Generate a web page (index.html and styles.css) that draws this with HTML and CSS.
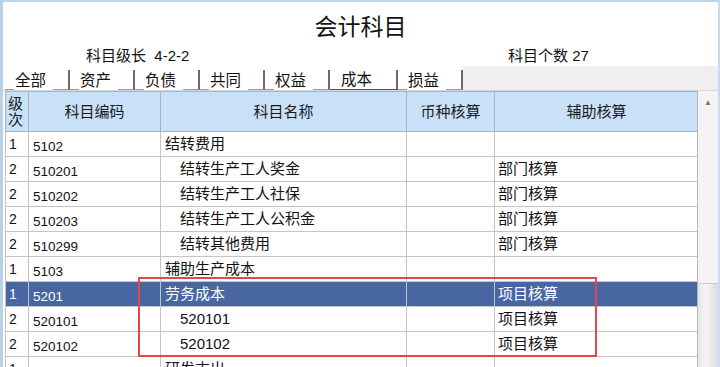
FILE: index.html
```html
<!DOCTYPE html>
<html lang="zh-CN">
<head>
  <meta charset="UTF-8">
  <title>会计科目</title>
  <link rel="stylesheet" href="styles.css">
</head>
<body>

<div class="window">
  <h1 class="title">会计科目</h1>
  <div class="info">
    <span class="info-level">科目级长&nbsp; 4-2-2</span>
    <span class="info-count">科目个数 27</span>
  </div>

  <!-- 科目类别 -->
  <div class="tabs">
    <div class="tab"><span>全部</span></div>
    <div class="tab"><span>资产</span></div>
    <div class="tab"><span>负债</span></div>
    <div class="tab"><span>共同</span></div>
    <div class="tab"><span>权益</span></div>
    <div class="tab active"><span>成本</span></div>
    <div class="tab"><span>损益</span></div>
    <div class="tab-fill"></div>
  </div>

  <div class="grid-area">
    <div class="grid-wrap">
      <table class="grid">
        <colgroup>
          <col class="c-level">
          <col class="c-code">
          <col class="c-name">
          <col class="c-cur">
          <col class="c-aux">
        </colgroup>
        <thead>
          <tr>
            <th class="h-level">级<br>次</th>
            <th>科目编码</th>
            <th>科目名称</th>
            <th>币种核算</th>
            <th>辅助核算</th>
          </tr>
        </thead>
        <tbody>
          <tr><td class="lv">1</td><td class="code">5102</td><td class="name">结转费用</td><td></td><td class="aux"></td></tr>
          <tr><td class="lv">2</td><td class="code">510201</td><td class="name sub">结转生产工人奖金</td><td></td><td class="aux">部门核算</td></tr>
          <tr><td class="lv">2</td><td class="code">510202</td><td class="name sub">结转生产工人社保</td><td></td><td class="aux">部门核算</td></tr>
          <tr><td class="lv">2</td><td class="code">510203</td><td class="name sub">结转生产工人公积金</td><td></td><td class="aux">部门核算</td></tr>
          <tr><td class="lv">2</td><td class="code">510299</td><td class="name sub">结转其他费用</td><td></td><td class="aux">部门核算</td></tr>
          <tr><td class="lv">1</td><td class="code">5103</td><td class="name">辅助生产成本</td><td></td><td class="aux"></td></tr>
          <tr class="selected"><td class="lv">1</td><td class="code">5201</td><td class="name">劳务成本</td><td></td><td class="aux">项目核算</td></tr>
          <tr><td class="lv">2</td><td class="code">520101</td><td class="name sub">520101</td><td></td><td class="aux">项目核算</td></tr>
          <tr><td class="lv">2</td><td class="code">520102</td><td class="name sub">520102</td><td></td><td class="aux">项目核算</td></tr>
          <tr><td class="lv">1</td><td class="code">5301</td><td class="name">研发支出</td><td></td><td class="aux"></td></tr>
        </tbody>
      </table>
      <div class="mark"></div>
    </div>
    <div class="scrollbar">
      <div class="track"><span class="arrow">&#9650;</span></div>
      <div class="thumb"></div>
    </div>
  </div>
</div>

</body>
</html>
```

FILE: styles.css
```css
html, body {
  margin: 0;
  height: 100%;
  overflow: hidden;
}
body {
  font-family: "Liberation Sans", "Noto Sans CJK SC", sans-serif;
  background-color: #ffffff;
  color: #111;
}
.window {
  height: 100%;
  box-sizing: border-box;
  border-top: 2px solid #bcd5ee;
  border-left: 3px solid #b7d2e6;
  border-right: 2px solid #c6dcef;
  display: flex;
  flex-direction: column;
}
.title {
  margin: 0;
  padding-top: 10px;
  height: 30px;
  line-height: 30px;
  font-size: 23px;
  font-weight: 400;
  text-align: center;
  color: #111;
}
.info {
  margin-top: 4px;
  height: 20px;
  line-height: 20px;
  font-size: 15px;
  display: flex;
}
.info-level {
  margin-left: 83px;
  width: 422px;
}
.info-count {
  font-size: 15px;
}
.tabs {
  display: flex;
  height: 24px;
  padding-left: 2px;
  border-bottom: 1px solid #d6d6d6;
}
.tab {
  width: 65px;
  display: flex;
  align-items: flex-end;
  padding-left: 9px;
  box-sizing: border-box;
  border-right: 2px solid #6a6a6a;
  border-bottom: 1px solid #9a9a9a;
  background-color: #fff;
  margin-top: 4px;
}
.tab span {
  background-color: #fff;
  font-size: 15.5px;
  line-height: 19px;
  padding: 0 7px 0 1px;
  margin-bottom: -1px;
  position: relative;
}
.tab.active {
  width: 68px;
  padding-left: 10px;
  border-bottom: 1px solid #555;
}
.tab.active span {
  background: none;
  margin-bottom: 0;
}
.tab-fill {
  flex: 1;
  background-color: #efefef;
}
.grid-area {
  flex: 1;
  display: flex;
  min-height: 0;
}
.grid-wrap {
  width: 693px;
  position: relative;
  overflow: hidden;
  margin-left: 2px;
}
.grid {
  border-collapse: collapse;
  table-layout: fixed;
  width: 693px;
  font-size: 14px;
}
.c-level { width: 23px; }
.c-code { width: 132px; }
.c-name { width: 246px; }
.c-cur { width: 88px; }
.c-aux { width: 204px; }
.grid th {
  height: 39px;
  padding: 0;
  background-color: #c8e0f8;
  border: 1px solid #a7b4c2;
  font-size: 15px;
  font-weight: 400;
  line-height: 18px;
  color: #1a1a1a;
}
.grid th.h-level {
  font-size: 15px;
  line-height: 16px;
  text-align: left;
  padding-left: 2px;
}
.grid td {
  height: 24px;
  padding: 0;
  border: 1px solid #c4c4c4;
  white-space: nowrap;
  overflow: hidden;
  line-height: 18px;
}
.grid td.lv {
  vertical-align: top;
  padding: 3px 0 0 3px;
  height: 21px;
}
.grid td.code {
  padding: 6px 0 0 4px;
  height: 18px;
  font-size: 13.5px;
}
.grid td.name {
  padding-left: 4px;
  font-size: 15px;
}
.grid td.name.sub {
  padding-left: 19px;
}
.grid td.aux {
  padding-left: 3px;
  font-size: 15px;
}
.grid tr.selected td {
  background-color: #4866a2;
  color: #fff;
}
.mark {
  position: absolute;
  left: 133px;
  top: 186px;
  width: 455px;
  height: 76px;
  border: 2px solid #e2474c;
}
.scrollbar {
  width: 20px;
  display: flex;
  flex-direction: column;
  border-left: 1px solid #b5b5b5;
}
.track {
  height: 192px;
  background-color: #f4f4f4;
  text-align: center;
}
.arrow {
  font-size: 8px;
  color: #777;
  line-height: 18px;
}
.thumb {
  flex: 1;
  background: linear-gradient(to right, #e6e6e6, #f6f6f6 40%, #dcdcdc);
  border-top: 1px solid #c9c9c9;
}
```
